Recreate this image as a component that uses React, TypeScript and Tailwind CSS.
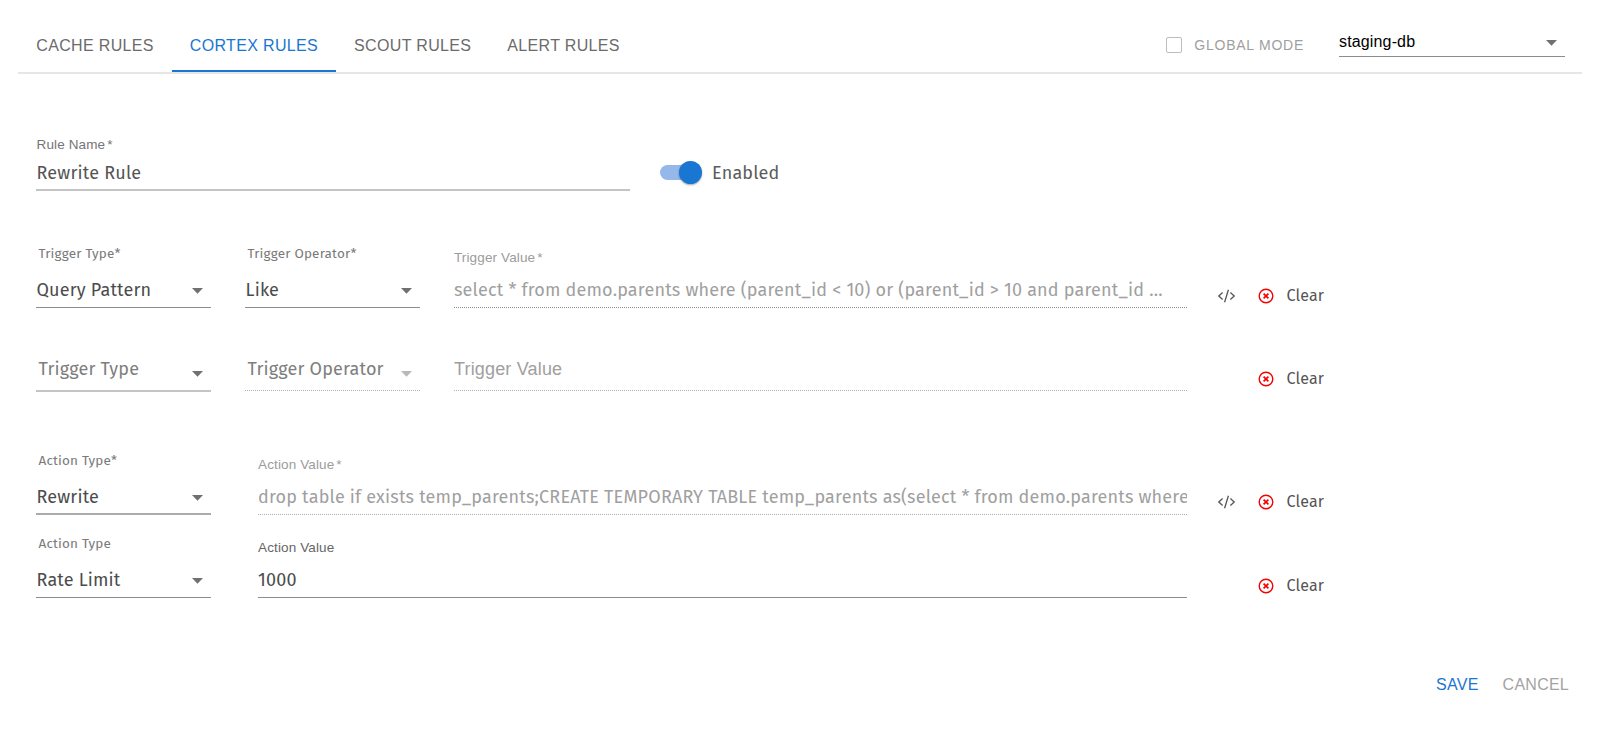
import type { ReactNode } from "react";

const humanist = "font-['Fira_Sans','Noto_Sans',sans-serif] tracking-[0.0105em]";

function Arrow({ className = "" }: { className?: string }) {
  return (
    <svg className={`h-[6px] w-[11px] shrink-0 ${className}`} viewBox="0 0 11 6">
      <path d="M0 0h11L5.5 5.7z" fill="currentColor" />
    </svg>
  );
}

function Tab({ children, active = false }: { children: ReactNode; active?: boolean }) {
  return (
    <div
      className={`h-[52px] border-b-2 pl-[18.25px] pr-[17.75px] pt-[14px] text-[16px] leading-6 tracking-[0.34px] ${
        active ? "border-[#1976d2] text-[#1976d2]" : "border-transparent text-[#6b6b6b]"
      }`}
    >
      {children}
    </div>
  );
}

type SelectProps = {
  label: string;
  value?: string;
  line: string;
  disabled?: boolean;
  className?: string;
};

function SelectField({ label, value, line, disabled = false, className = "" }: SelectProps) {
  return (
    <div className={`flex h-[64px] w-[175px] shrink-0 flex-col ${humanist} ${className}`}>
      {value ? (
        <>
          <div className="h-4 pl-[2.5px] text-[13.5px] leading-4 text-[#7a7a7a]">{label}</div>
          <div className={`mt-4 flex h-[30px] justify-between pr-2 ${line}`}>
            <span className="pl-[0.5px] text-[18px] leading-6 text-[#4c4c4c]">{value}</span>
            <Arrow className="mt-[10px] text-[#707070]" />
          </div>
        </>
      ) : (
        <div className={`mt-[28px] flex justify-between pr-2 ${disabled ? "h-[34px]" : "h-[35px]"} ${line}`}>
          <span className="pl-[2.5px] text-[18px] leading-6 text-[#7e7e7e]">{label}</span>
          <Arrow className={`mt-[14px] ${disabled ? "text-[#b8b8b8]" : "text-[#707070]"}`} />
        </div>
      )}
    </div>
  );
}

type InputProps = {
  label: string;
  value?: string;
  required?: boolean;
  disabled?: boolean;
  line: string;
  className?: string;
};

function InputField({ label, value, required = false, disabled = false, line, className = "" }: InputProps) {
  if (!value) {
    return (
      <div className={`h-[64px] shrink-0 pt-[28px] ${className}`}>
        <div className={`h-[34px] text-[18px] leading-6 tracking-[0.00938em] text-[#a0a0a0] ${line}`}>{label}</div>
      </div>
    );
  }
  return (
    <div className={`h-[64px] shrink-0 pt-1 ${className}`}>
      <div
        className={`h-4 text-[13.5px] leading-4 tracking-[0.00938em] ${disabled ? "text-[#9c9c9c]" : "text-[#666]"}`}
      >
        {label}
        {required && <span className="ml-[2px]">*</span>}
      </div>
      <div
        className={`mt-[12px] h-[30px] overflow-hidden whitespace-nowrap text-[18px] leading-6 ${humanist} ${
          disabled ? "text-[#a0a0a0]" : "text-[#4c4c4c]"
        } ${line}`}
      >
        {value}
      </div>
    </div>
  );
}

function RowActions({ code = false, className = "mt-[37.5px]" }: { code?: boolean; className?: string }) {
  return (
    <div className={`flex h-6 items-center pl-[30px] ${className}`}>
      <svg className={`h-[14px] w-[19px] ${code ? "" : "invisible"}`} viewBox="0 0 19 14" fill="none" stroke="#555">
        <path d="M5.6 3.6 1.8 7l3.8 3.4M13.4 3.6 17.2 7l-3.8 3.4M11.4.8 7.6 13.2" strokeWidth="1.3" />
      </svg>
      <svg className="ml-[22px] h-4 w-4" viewBox="0 0 16 16" fill="none" stroke="#f60000">
        <circle cx="8" cy="8" r="6.8" strokeWidth="1.4" />
        <path d="M5.6 5.6l4.8 4.8M10.4 5.6l-4.8 4.8" strokeWidth="1.7" />
      </svg>
      <span className={`ml-[12.5px] text-[16px] leading-6 text-[#555] ${humanist}`}>Clear</span>
    </div>
  );
}

const solidDark = "border-b border-[#8c8c8c]";
const solidSoft = "border-b-2 border-[#c4c4c4]";
const solidMid = "border-b-2 border-[#ababab]";
const dottedDark = "border-b border-dotted border-[#8c8c8c]";
const dottedSoft = "border-b border-dotted border-[#b0b0b0]";

export default function App() {
  return (
    <div className="h-[732px] w-[1600px] overflow-hidden bg-white font-['Liberation_Sans',Arial,sans-serif]">
      <header className="mx-[18px] flex h-[74px] justify-between border-b-2 border-[#e6e6e6] pt-5">
        <nav className="flex">
          <Tab>CACHE RULES</Tab>
          <Tab active>CORTEX RULES</Tab>
          <Tab>SCOUT RULES</Tab>
          <Tab>ALERT RULES</Tab>
        </nav>
        <div className="flex">
          <div className="mt-[17px] size-4 rounded-[2px] border-[1.5px] border-[#bdbdbd]" />
          <span className="ml-3 mt-[13px] text-[14px] leading-6 tracking-[0.75px] text-[#9f9f9f]">GLOBAL MODE</span>
          <div className="ml-[35px] mr-[17px] mt-[9px] flex h-[28px] w-[226px] justify-between border-b border-[#8c8c8c] pr-2">
            <span className="pt-px text-[16px] leading-6 tracking-[0.00938em] text-black">staging-db</span>
            <Arrow className="mt-[11px] text-[#707070]" />
          </div>
        </div>
      </header>

      <main className="px-9">
        <section className="flex h-[117px] pt-[63px]">
          <div className="w-[594px]">
            <div className="h-4 pl-[0.5px] text-[13.5px] leading-4 tracking-[0.00938em] text-[#757575]">
              Rule Name<span className="ml-[2px]">*</span>
            </div>
            <div className={`mt-2 h-[30px] pl-[0.5px] text-[18px] leading-6 text-[#545454] ${humanist} ${solidSoft}`}>
              Rewrite Rule
            </div>
          </div>
          <div className="ml-[30px] mt-[23.5px] flex h-6 items-center">
            <div className="flex h-[15px] w-[41px] items-center justify-end rounded-full bg-[#94b8e9]">
              <div className="-mr-px size-[23px] shrink-0 rounded-full bg-[#1976d2] shadow-[0_1px_2px_rgba(0,0,0,0.35)]" />
            </div>
            <span className={`ml-[11px] text-[18px] leading-6 text-[#5c5c5c] ${humanist}`}>Enabled</span>
          </div>
        </section>

        <section className="mt-[55px] flex h-[64px]">
          <SelectField label="Trigger Type*" value="Query Pattern" line={solidDark} />
          <SelectField className="ml-[34px]" label="Trigger Operator*" value="Like" line={solidDark} />
          <InputField
            className="ml-[34px] w-[733px]"
            label="Trigger Value"
            required
            disabled
            value="select * from demo.parents where (parent_id < 10) or (parent_id > 10 and parent_id ..."
            line={dottedDark}
          />
          <RowActions code />
        </section>
        <section className="mt-[19px] flex h-[64px]">
          <SelectField label="Trigger Type" line={solidSoft} />
          <SelectField className="ml-[34px]" label="Trigger Operator" line={dottedSoft} disabled />
          <InputField className="ml-[34px] w-[733px]" label="Trigger Value" line={dottedSoft} />
          <RowActions className="mt-[38px]" />
        </section>

        <section className="mt-[59.5px] flex h-[64px]">
          <SelectField label="Action Type*" value="Rewrite" line={solidMid} />
          <InputField
            className="ml-[47px] w-[929px]"
            label="Action Value"
            required
            disabled
            value="drop table if exists temp_parents;CREATE TEMPORARY TABLE temp_parents as(select * from demo.parents where"
            line={dottedSoft}
          />
          <RowActions code />
        </section>
        <section className="mt-[19.5px] flex h-[64px]">
          <SelectField label="Action Type" value="Rate Limit" line={solidDark} />
          <InputField className="ml-[47px] w-[929px]" label="Action Value" value="1000" line={solidDark} />
          <RowActions />
        </section>
      </main>

      <footer className="mt-[72.5px] flex justify-end pr-[31px] text-[16px] leading-6 tracking-[0.25px]">
        <button className="text-[#1976d2]">SAVE</button>
        <button className="ml-6 text-[#a3a3a3]">CANCEL</button>
      </footer>
    </div>
  );
}
